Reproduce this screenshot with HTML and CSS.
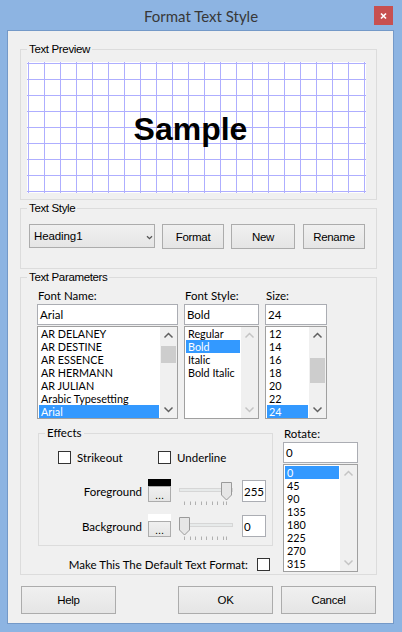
FILE: index.html
```html
<!DOCTYPE html>
<html>
<head>
<meta charset="utf-8">
<title>Format Text Style</title>
<link rel="stylesheet" href="styles.css">
</head>
<body>
<div class="window">
  <div class="titlebar">
    <div class="title">Format Text Style</div>
    <div class="close"><svg width="19" height="19" viewBox="0 0 19 19"><path d="M7 7.5L12 12.5M12 7.5L7 12.5" stroke="#fff" stroke-width="1.7" fill="none"/></svg></div>
  </div>
  <div class="client">
    <div class="group g-preview">
      <div class="legend">Text Preview</div>
      <div class="preview"><span class="sample">Sample</span></div>
    </div>

    <div class="group g-style">
      <div class="legend">Text Style</div>
      <div class="style-row">
        <div class="combo btnface"><span>Heading1</span><svg class="chev" width="7" height="5" viewBox="0 0 7 5"><path d="M1 1.2L3.5 3.7L6 1.2" stroke="#555" stroke-width="1.3" fill="none"/></svg></div>
        <div class="btn btnface b-format">Format</div>
        <div class="btn btnface b-new">New</div>
        <div class="btn btnface b-rename">Rename</div>
      </div>
    </div>

    <div class="group g-params">
      <div class="legend">Text Parameters</div>
      <div class="font-cols">
        <div class="col c-name">
          <div class="lbl">Font Name:</div>
          <div class="tbox">Arial</div>
          <div class="list">
            <div class="items">
              <div class="item">AR DELANEY</div>
              <div class="item">AR DESTINE</div>
              <div class="item">AR ESSENCE</div>
              <div class="item">AR HERMANN</div>
              <div class="item">AR JULIAN</div>
              <div class="item">Arabic Typesetting</div>
              <div class="item sel">Arial</div>
            </div>
            <div class="sbar">
              <div class="arr"><svg width="17" height="17" viewBox="0 0 17 17"><path d="M4.5 10.5L8.5 6.5L12.5 10.5" stroke="#606060" stroke-width="1.5" fill="none"/></svg></div>
              <div class="trk"><div class="thumb t-name"></div></div>
              <div class="arr"><svg width="17" height="17" viewBox="0 0 17 17"><path d="M4.5 6.5L8.5 10.5L12.5 6.5" stroke="#606060" stroke-width="1.5" fill="none"/></svg></div>
            </div>
          </div>
        </div>
        <div class="col c-style">
          <div class="lbl">Font Style:</div>
          <div class="tbox">Bold</div>
          <div class="list">
            <div class="items">
              <div class="item">Regular</div>
              <div class="item sel">Bold</div>
              <div class="item">Italic</div>
              <div class="item">Bold Italic</div>
            </div>
            <div class="sbar">
              <div class="arr"><svg width="17" height="17" viewBox="0 0 17 17"><path d="M4.5 10.5L8.5 6.5L12.5 10.5" stroke="#c4c4c4" stroke-width="1.5" fill="none"/></svg></div>
              <div class="trk"></div>
              <div class="arr"><svg width="17" height="17" viewBox="0 0 17 17"><path d="M4.5 6.5L8.5 10.5L12.5 6.5" stroke="#c4c4c4" stroke-width="1.5" fill="none"/></svg></div>
            </div>
          </div>
        </div>
        <div class="col c-size">
          <div class="lbl">Size:</div>
          <div class="tbox">24</div>
          <div class="list">
            <div class="items">
              <div class="item">12</div>
              <div class="item">14</div>
              <div class="item">16</div>
              <div class="item">18</div>
              <div class="item">20</div>
              <div class="item">22</div>
              <div class="item sel">24</div>
            </div>
            <div class="sbar">
              <div class="arr"><svg width="17" height="17" viewBox="0 0 17 17"><path d="M4.5 10.5L8.5 6.5L12.5 10.5" stroke="#606060" stroke-width="1.5" fill="none"/></svg></div>
              <div class="trk"><div class="thumb t-size"></div></div>
              <div class="arr"><svg width="17" height="17" viewBox="0 0 17 17"><path d="M4.5 6.5L8.5 10.5L12.5 6.5" stroke="#606060" stroke-width="1.5" fill="none"/></svg></div>
            </div>
          </div>
        </div>
      </div>

      <div class="lower">
        <div class="left">
          <div class="group effects">
            <div class="legend seg">Effects</div>
            <div class="checks">
              <div class="chk c1"><span class="box"></span><span>Strikeout</span></div>
              <div class="chk"><span class="box"></span><span>Underline</span></div>
            </div>
            <div class="crow fg">
              <div class="clab">Foreground</div>
              <div class="swcol"><div class="sw black"></div><div class="dots btnface">...</div></div>
              <svg class="slider" width="54" height="27" viewBox="0 0 54 27">
                <rect x="0.5" y="9.5" width="53" height="3" fill="#e7eaea" stroke="#d6d6d6"/>
                <path d="M5.5 22.5V26M11.5 22.5V26M16.5 22.5V26M22.5 22.5V26M27.5 22.5V26M33.5 22.5V26M38.5 22.5V26M44.5 22.5V26M47.5 22.5V26" stroke="#b0b0b0" fill="none"/>
                <path d="M42.5 3.5H52.5V16L47.5 21L42.5 16Z" fill="#e6e6e6" stroke="#9a9a9a"/>
              </svg>
              <div class="val">255</div>
            </div>
            <div class="crow bg">
              <div class="clab">Background</div>
              <div class="swcol"><div class="sw white"></div><div class="dots btnface">...</div></div>
              <svg class="slider" width="54" height="27" viewBox="0 0 54 27">
                <rect x="0.5" y="9.5" width="53" height="3" fill="#e7eaea" stroke="#d6d6d6"/>
                <path d="M5.5 22.5V26M11.5 22.5V26M16.5 22.5V26M22.5 22.5V26M27.5 22.5V26M33.5 22.5V26M38.5 22.5V26M44.5 22.5V26M47.5 22.5V26" stroke="#b0b0b0" fill="none"/>
                <path d="M0.5 3.5H10.5V16L5.5 21L0.5 16Z" fill="#e6e6e6" stroke="#9a9a9a"/>
              </svg>
              <div class="val">0</div>
            </div>
          </div>
          <div class="defrow"><span>Make This The Default Text Format:</span><span class="box"></span></div>
        </div>
        <div class="rotate">
          <div class="lbl">Rotate:</div>
          <div class="tbox">0</div>
          <div class="list rlist">
            <div class="items">
              <div class="item sel">0</div>
              <div class="item">45</div>
              <div class="item">90</div>
              <div class="item">135</div>
              <div class="item">180</div>
              <div class="item">225</div>
              <div class="item">270</div>
              <div class="item">315</div>
            </div>
            <div class="sbar">
              <div class="arr"><svg width="17" height="17" viewBox="0 0 17 17"><path d="M4.5 10.5L8.5 6.5L12.5 10.5" stroke="#c4c4c4" stroke-width="1.5" fill="none"/></svg></div>
              <div class="trk"></div>
              <div class="arr"><svg width="17" height="17" viewBox="0 0 17 17"><path d="M4.5 6.5L8.5 10.5L12.5 6.5" stroke="#c4c4c4" stroke-width="1.5" fill="none"/></svg></div>
            </div>
          </div>
        </div>
      </div>
    </div>

    <div class="buttons">
      <div class="btn btnface big">Help</div>
      <div class="btn btnface big ok">OK</div>
      <div class="btn btnface big cancel">Cancel</div>
    </div>
  </div>
</div>
</body>
</html>
```

FILE: styles.css
```css
* { box-sizing: border-box; }
html, body { margin: 0; padding: 0; }
body {
  width: 402px;
  height: 632px;
  overflow: hidden;
  background: #8db4e2;
  font-family: "Lato", "Noto Sans", sans-serif;
  font-size: 11.5px;
  color: #000;
}
.window { width: 402px; height: 632px; display: flex; flex-direction: column; }

.titlebar {
  height: 31px;
  display: grid;
  grid-template-columns: 1fr auto 1fr;
  align-items: center;
}
.title {
  grid-column: 2;
  font-family: "Lato", sans-serif;
  font-size: 15px;
  line-height: 20px;
  color: #383838;
}
.close {
  grid-column: 3;
  justify-self: end;
  align-self: start;
  margin: 6px 9px 0 0;
  width: 19px;
  height: 19px;
  background: #c75050;
  display: flex;
}

.client {
  margin: 0 9px 0 8px;
  height: 592px;
  background: #f0f0f0;
  box-shadow: 0 0 0 1px #7499c8;
  display: flex;
  flex-direction: column;
}

.group { border: 1px solid #dcdcdc; }
.legend {
  font-family: "Liberation Sans", Arial, sans-serif;
  font-size: 11.5px;
  letter-spacing: -0.35px;
  line-height: 14px;
  height: 14px;
  margin: -8px 0 0 6px;
  padding: 0 2px;
  background: #f0f0f0;
  width: max-content;
}
.legend.seg {
  font-family: "Lato", sans-serif;
  font-size: 11.5px;
  letter-spacing: 0;
}

.g-preview { margin: 18px 0 0 12px; width: 357px; padding-bottom: 6px; }
.preview {
  margin: 6px 0 0 6px;
  width: 339px;
  height: 131px;
  background-color: #fff;
  background-image:
    linear-gradient(to right, #aeaeff 1px, transparent 1px),
    linear-gradient(to bottom, #aeaeff 1px, transparent 1px);
  background-size: 16px 16px;
  background-position: 1px 1px;
  display: flex;
  align-items: center;
  justify-content: center;
  padding: 3px 12px 0 0;
}
.sample {
  font-family: "Liberation Sans", Arial, sans-serif;
  font-weight: bold;
  font-size: 32px;
  line-height: 32px;
  color: #000;
}

.g-style { margin: 8px 0 0 12px; width: 357px; }
.style-row { display: flex; align-items: flex-start; margin: 9px 0 19px 8px; }
.btnface {
  border: 1px solid #acacac;
  background: linear-gradient(#f0f0f0, #e5e5e5);
}
.btn {
  display: flex;
  align-items: center;
  justify-content: center;
  font-family: "Liberation Sans", Arial, sans-serif;
  font-size: 11.5px;
  letter-spacing: -0.3px;
}
.combo {
  width: 126px;
  height: 24px;
  display: flex;
  align-items: center;
  justify-content: space-between;
  padding: 0 0 0 4px;
  font-family: "Liberation Sans", Arial, sans-serif;
  font-size: 11.5px;
  letter-spacing: -0.1px;
}
.chev { margin: 2px 1px 0 0; }
.b-format { width: 62px; height: 25px; margin-left: 7px; }
.b-new { width: 64px; height: 25px; margin-left: 7px; }
.b-rename { width: 62px; height: 25px; margin-left: 8px; }

.g-params { margin: 8px 0 0 12px; width: 357px; padding-bottom: 2px; }
.font-cols { display: flex; gap: 6px; margin-left: 16px; }
.col { display: flex; flex-direction: column; }
.c-name { width: 141px; }
.c-style { width: 75px; }
.c-size { width: 62px; }
.lbl { height: 14px; line-height: 14px; margin: 5px 0 1px 0; padding-left: 1px; }
.tbox {
  height: 21px;
  border: 1px solid #abadb3;
  background: #fff;
  display: flex;
  align-items: center;
  padding-left: 2px;
}
.list {
  margin-top: 1px;
  height: 93px;
  border: 1px solid #a0a0a0;
  background: #fff;
  display: flex;
}
.items { flex: 1; padding: 0 1px; overflow: hidden; }
.item { height: 13px; line-height: 13px; font-size: 10.8px; padding-left: 2px; white-space: nowrap; }
.sel { background: #3399ff; color: #fff; }
.sbar { width: 17px; background: #f0f0f0; display: flex; flex-direction: column; }
.arr { height: 17px; display: flex; }
.trk { flex: 1; }
.thumb { margin: 0 1px; background: #cdcdcd; }
.t-name { margin-top: 2px; height: 17px; }
.t-size { margin-top: 14px; height: 25px; }

.lower { display: flex; align-items: flex-start; margin-left: 17px; }
.left { width: 235px; display: flex; flex-direction: column; }
.effects { margin-top: 14px; width: 235px; padding-bottom: 8px; }
.checks { display: flex; align-items: center; height: 13px; margin: 11px 0 0 19px; }
.chk { display: flex; align-items: center; gap: 6px; }
.chk.c1 { width: 100px; }
.box { width: 13px; height: 13px; border: 1px solid #333; background: #fff; display: block; flex: none; }
.crow { display: flex; align-items: flex-start; height: 23px; }
.crow.fg { margin-top: 15px; }
.crow.bg { margin-top: 12px; }
.clab { width: 103px; text-align: right; align-self: flex-end; line-height: 14px; margin-bottom: 3px; }
.swcol { margin-left: 6px; width: 23px; display: flex; flex-direction: column; }
.sw { height: 7px; }
.sw.black { background: #000; }
.sw.white { background: #fff; }
.dots {
  height: 16px;
  display: flex;
  align-items: flex-end;
  justify-content: center;
  font-family: "Liberation Sans", Arial, sans-serif;
  font-size: 11px;
  line-height: 11px;
}
.slider { display: block; margin: 0 0 -4px 8px; }
.val {
  margin: 1px 0 0 9px;
  width: 24px;
  height: 22px;
  border: 1px solid #abadb3;
  background: #fff;
  padding-left: 1px;
  display: flex;
  align-items: center;
}
.defrow {
  margin-top: 12px;
  height: 13px;
  display: flex;
  align-items: center;
  justify-content: flex-end;
  gap: 9px;
  padding-right: 3px;
}

.rotate { width: 75px; margin: 8px 0 0 10px; display: flex; flex-direction: column; }
.rotate .lbl { margin-top: 0; }
.rlist { height: 108px; }
.rlist .items { padding-top: 1px; }

.buttons { display: flex; width: 355px; margin: 11px 0 0 13px; }
.big { width: 95px; height: 28px; }
.ok { margin-left: auto; }
.cancel { margin-left: 8px; }
```
